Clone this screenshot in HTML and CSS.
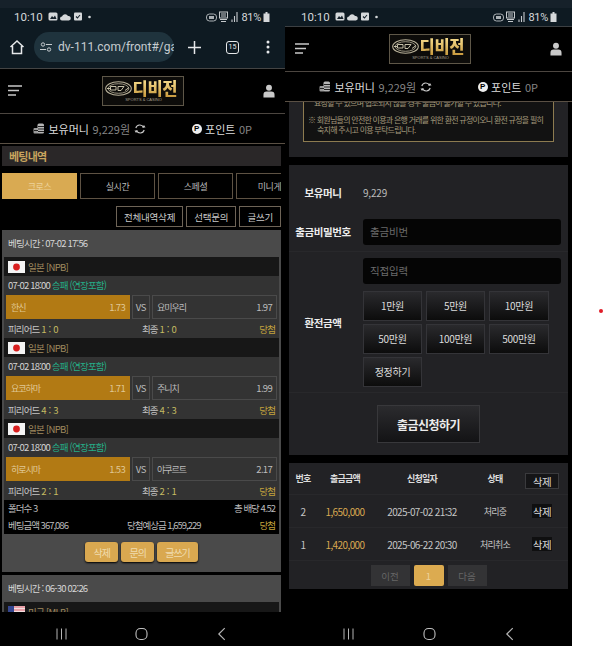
FILE: index.html
```html
<!DOCTYPE html>
<html lang="ko">
<head>
    <meta charset="UTF-8">
    <meta name="viewport" content="width=device-width, initial-scale=1.0">
    <title>디비전</title>
    <link rel="stylesheet" href="styles.css">
</head>
<body>
    <svg class="sprites" xmlns="http://www.w3.org/2000/svg">
        <symbol id="i-status-left" viewBox="0 0 46 10">
            <rect x="0.5" y="0.5" width="9" height="8" rx="1.5" fill="#d5d8da"/>
            <path d="M2 7l2-3 1.500 1.500L7 3.500 8.500 7z" fill="#142029"/>
            <path d="M14 8.500a2 2 0 0 1 0-4 3.200 3.200 0 0 1 6-.5 2.300 2.300 0 0 1 1 4.500z" fill="#d5d8da"/>
            <rect x="26" y="0.500" width="8" height="8" rx="1" fill="#d5d8da"/>
            <path d="M28 4.500l1.500 1.500 2.500-3" stroke="#142029" stroke-width="1.100" fill="none"/>
            <circle cx="41.500" cy="5" r="1.300" fill="#d5d8da"/>
        </symbol>
        <symbol id="i-status-right" viewBox="0 0 32 12">
            <rect x="0.500" y="3" width="10" height="7" rx="3" fill="none" stroke="#aab0b4"/>
            <rect x="3" y="5" width="5" height="3" fill="#aab0b4"/>
            <rect x="13.500" y="1" width="8" height="6" fill="none" stroke="#c5c9cc"/>
            <path d="M15 3h5M15 5h5M14 8.500h7M15 10.500h5" stroke="#c5c9cc"/>
            <path d="M26 11V8.500M28.500 11V5M31 11V1" stroke="#c5c9cc" stroke-width="1.100"/>
        </symbol>
        <symbol id="i-battery" viewBox="0 0 7 10">
            <path d="M2.500 0h2v1.500h2V10H.5V1.500h2z" fill="#d5d8da"/>
        </symbol>
        <symbol id="i-menu" viewBox="0 0 14 12">
            <path d="M0 1h14M0 5.500h11M0 10h8" stroke="#c8c8c8" stroke-width="1.300"/>
        </symbol>
        <symbol id="i-user" viewBox="0 0 13 14">
            <circle cx="6.500" cy="3.500" r="3.200" fill="#c9c9c9"/>
            <path d="M0.500 14v-3a3.500 3.500 0 0 1 3.500-3.500h5a3.500 3.500 0 0 1 3.500 3.500v3z" fill="#c9c9c9"/>
        </symbol>
        <symbol id="i-coins" viewBox="0 0 12 11">
            <rect x="0.500" y="5" width="5" height="5.500" rx="1" fill="#9a9a9a"/>
            <rect x="4.500" y="0.500" width="6.500" height="10" rx="1.500" fill="#b5b5b5"/>
            <path d="M5 3.500h6M5 6h6M5 8.500h6M1 7.500h4" stroke="#222"/>
        </symbol>
        <symbol id="i-refresh" viewBox="0 0 12 10">
            <path d="M1.800 4a4.200 4.200 0 0 1 7.800-.6M10.200 6a4.200 4.200 0 0 1-7.800.6" stroke="#c8c8c8" fill="none" stroke-width="1.100"/>
            <path d="M8 3.500h3.500L10 1zM4 6.500H.5L2 9z" fill="#c8c8c8"/>
        </symbol>
        <symbol id="i-emblem" viewBox="0 0 27 15">
            <ellipse cx="13.500" cy="7.500" rx="12.800" ry="6.800" fill="none" stroke="#b9b29a" stroke-width="1.100"/>
            <ellipse cx="13.500" cy="7.500" rx="10.300" ry="4.800" fill="none" stroke="#b9b29a" stroke-width="0.800"/>
            <path d="M5.500 5.500h5.500v3.500H5.500zM13 5.500h6l-3 4h-3zM2 7.500h3M20 9.500l4-3" stroke="#d8d2b8" stroke-width="0.900" fill="none"/>
        </symbol>
        <symbol id="i-flag-jp" viewBox="0 0 17 12">
            <rect width="17" height="12" fill="#f4f4f4"/>
            <circle cx="8.500" cy="6" r="3.400" fill="#d81e1e"/>
        </symbol>
        <symbol id="i-flag-us" viewBox="0 0 17 12">
            <rect width="17" height="12" fill="#e8a0a8"/>
            <path d="M0 2.500h17M0 5.500h17M0 8.500h17" stroke="#f3dfe0" stroke-width="1.200"/>
            <rect width="6" height="12" fill="#35468f"/>
        </symbol>
        <symbol id="i-nav" viewBox="0 0 12 14">
            <path d="M1.500 1.500v11M6 1.500v11M10.500 1.500v11" stroke="#b5b5b5" stroke-width="1"/>
        </symbol>
        <symbol id="i-nav-home" viewBox="0 0 13 13">
            <rect x="1" y="1" width="11" height="11" rx="4.500" fill="none" stroke="#c0c0c0" stroke-width="1.100"/>
        </symbol>
        <symbol id="i-nav-back" viewBox="0 0 8 13">
            <path d="M7 1L1.500 6.500 7 12" fill="none" stroke="#b5b5b5" stroke-width="1.100"/>
        </symbol>
    </svg>

    <div class="screens">
        <!-- left phone : betting history -->
        <section class="phone phone-left">
            <div class="top-band"></div>
            <div class="status-bar">
                <span class="clock">10:10</span>
                <svg class="status-icons"><use href="#i-status-left"/></svg>
                <span class="status-right">
                    <svg class="status-net"><use href="#i-status-right"/></svg>
                    <span>81%</span>
                    <svg class="status-battery"><use href="#i-battery"/></svg>
                </span>
            </div>
            <div class="chrome-bar">
                <svg class="chrome-home" viewBox="0 0 16 16"><path d="M1.500 8L8 2l6.500 6M3.500 7v7.500h9V7" fill="none" stroke="#e6e8ea" stroke-width="1.500"/></svg>
                <div class="url-pill">
                    <svg class="url-tune" viewBox="0 0 12 10"><circle cx="3" cy="2.500" r="1.700" fill="none" stroke="#c6ccd0"/><circle cx="9" cy="7.500" r="1.700" fill="none" stroke="#c6ccd0"/><path d="M6 2.500h6M0 7.500h6" stroke="#c6ccd0"/></svg>
                    <span class="url-text">dv-111.com/front#/game</span>
                </div>
                <svg class="chrome-plus" viewBox="0 0 13 13"><path d="M6.500 0v13M0 6.500h13" stroke="#e6e8ea" stroke-width="1.500"/></svg>
                <span class="chrome-tabs">15</span>
                <svg class="chrome-more" viewBox="0 0 4 14"><circle cx="2" cy="2" r="1.500" fill="#e6e8ea"/><circle cx="2" cy="7" r="1.500" fill="#e6e8ea"/><circle cx="2" cy="12" r="1.500" fill="#e6e8ea"/></svg>
            </div>
            <header class="site-header">
                <svg class="icon-menu"><use href="#i-menu"/></svg>
                <div class="logo">
                    <div class="logo-main">
                        <svg class="logo-emblem"><use href="#i-emblem"/></svg>
                        <span class="logo-name">디비전</span>
                    </div>
                    <div class="logo-sub">SPORTS &amp; CASINO</div>
                </div>
                <svg class="icon-user"><use href="#i-user"/></svg>
            </header>
            <div class="money-bar">
                <div class="money-item">
                    <svg class="icon-coins"><use href="#i-coins"/></svg>
                    <span>보유머니</span>
                    <span class="money-value">9,229원</span>
                    <svg class="icon-refresh"><use href="#i-refresh"/></svg>
                </div>
                <div class="money-item">
                    <span class="icon-point">P</span>
                    <span>포인트</span>
                    <span class="money-value">0P</span>
                </div>
            </div>

            <main class="history">
                <h2 class="history-title">베팅내역</h2>
                <div class="tabs">
                    <button class="tab tab-active">크로스</button>
                    <button class="tab">실시간</button>
                    <button class="tab">스페셜</button>
                    <button class="tab">미니게임</button>
                </div>
                <div class="history-actions">
                    <button class="outline-btn">전체내역삭제</button>
                    <button class="outline-btn">선택문의</button>
                    <button class="outline-btn">글쓰기</button>
                </div>

                <article class="bet-card">
                    <div class="bet-time">베팅시간 : 07-02 17:56</div>
                    <div class="game">
                        <div class="league"><svg class="flag"><use href="#i-flag-jp"/></svg>일본 [NPB]</div>
                        <div class="game-time">07-02 18:00 <span class="game-type">승패 (연장포함)</span></div>
                        <div class="odds">
                            <div class="odd odd-picked"><span class="odd-name">한신</span><span>1.73</span></div>
                            <div class="odd-vs">VS</div>
                            <div class="odd"><span class="odd-name">요미우리</span><span>1.97</span></div>
                        </div>
                        <div class="result">
                            <span class="result-period">피리어드 <em>1 : 0</em></span>
                            <span class="result-final">최종 <em>1 : 0</em></span>
                            <span class="result-win">당첨</span>
                        </div>
                    </div>
                    <div class="game">
                        <div class="league"><svg class="flag"><use href="#i-flag-jp"/></svg>일본 [NPB]</div>
                        <div class="game-time">07-02 18:00 <span class="game-type">승패 (연장포함)</span></div>
                        <div class="odds">
                            <div class="odd odd-picked"><span class="odd-name">요코하마</span><span>1.71</span></div>
                            <div class="odd-vs">VS</div>
                            <div class="odd"><span class="odd-name">주니치</span><span>1.99</span></div>
                        </div>
                        <div class="result">
                            <span class="result-period">피리어드 <em>4 : 3</em></span>
                            <span class="result-final">최종 <em>4 : 3</em></span>
                            <span class="result-win">당첨</span>
                        </div>
                    </div>
                    <div class="game">
                        <div class="league"><svg class="flag"><use href="#i-flag-jp"/></svg>일본 [NPB]</div>
                        <div class="game-time">07-02 18:00 <span class="game-type">승패 (연장포함)</span></div>
                        <div class="odds">
                            <div class="odd odd-picked"><span class="odd-name">히로시마</span><span>1.53</span></div>
                            <div class="odd-vs">VS</div>
                            <div class="odd"><span class="odd-name">야쿠르트</span><span>2.17</span></div>
                        </div>
                        <div class="result">
                            <span class="result-period">피리어드 <em>2 : 1</em></span>
                            <span class="result-final">최종 <em>2 : 1</em></span>
                            <span class="result-win">당첨</span>
                        </div>
                    </div>
                    <div class="bet-summary">
                        <div class="summary-row">
                            <span>폴더수 3</span>
                            <span>총 배당 4.52</span>
                        </div>
                        <div class="summary-row">
                            <span>베팅금액 367,086</span>
                            <span class="summary-expect">당첨예상금 1,659,229</span>
                            <span class="result-win">당첨</span>
                        </div>
                    </div>
                    <div class="bet-actions">
                        <button class="gold-btn">삭제</button>
                        <button class="gold-btn">문의</button>
                        <button class="gold-btn">글쓰기</button>
                    </div>
                </article>

                <article class="bet-card">
                    <div class="bet-time">베팅시간 : 06-30 02:26</div>
                    <div class="game">
                        <div class="league"><svg class="flag"><use href="#i-flag-us"/></svg>미국 [MLB]</div>
                    </div>
                </article>
            </main>

            <nav class="nav-bar">
                <svg class="nav-icon"><use href="#i-nav"/></svg>
                <svg class="nav-icon"><use href="#i-nav-home"/></svg>
                <svg class="nav-icon"><use href="#i-nav-back"/></svg>
            </nav>
        </section>

        <!-- right phone : withdraw -->
        <section class="phone phone-right">
            <div class="top-band"></div>
            <div class="status-bar">
                <span class="clock">10:10</span>
                <svg class="status-icons"><use href="#i-status-left"/></svg>
                <span class="status-right">
                    <svg class="status-net"><use href="#i-status-right"/></svg>
                    <span>81%</span>
                    <svg class="status-battery"><use href="#i-battery"/></svg>
                </span>
            </div>
            <header class="site-header">
                <svg class="icon-menu"><use href="#i-menu"/></svg>
                <div class="logo">
                    <div class="logo-main">
                        <svg class="logo-emblem"><use href="#i-emblem"/></svg>
                        <span class="logo-name">디비전</span>
                    </div>
                    <div class="logo-sub">SPORTS &amp; CASINO</div>
                </div>
                <svg class="icon-user"><use href="#i-user"/></svg>
            </header>
            <div class="money-bar">
                <div class="money-item">
                    <svg class="icon-coins"><use href="#i-coins"/></svg>
                    <span>보유머니</span>
                    <span class="money-value">9,229원</span>
                    <svg class="icon-refresh"><use href="#i-refresh"/></svg>
                </div>
                <div class="money-item">
                    <span class="icon-point">P</span>
                    <span>포인트</span>
                    <span class="money-value">0P</span>
                </div>
            </div>

            <main class="withdraw">
                <div class="panel notice-panel">
                    <div class="notice">
                        <p class="notice-cont">요청할 수 있으며 협조되지 않을 경우 출금이 불가할 수 있습니다.</p>
                        <p class="notice-line">※ 회원님들의 안전한 이용과 은행 거래를 위한 환전 규정이오니 환전 규정을 필히</p>
                        <p class="notice-indent">숙지해 주시고 이용 부탁드립니다.</p>
                    </div>
                </div>

                <div class="panel form-panel">
                    <div class="form-row form-row-balance">
                        <div class="form-label">보유머니</div>
                        <div class="form-value">9,229</div>
                    </div>
                    <div class="form-row form-row-password">
                        <div class="form-label">출금비밀번호</div>
                        <input class="form-input" type="text" placeholder="출금비번">
                    </div>
                    <div class="form-row form-row-amount">
                        <div class="form-label">환전금액</div>
                        <div class="amount-box">
                            <input class="form-input" type="text" placeholder="직접입력">
                            <div class="amount-grid">
                                <button class="amount-btn">1만원</button>
                                <button class="amount-btn">5만원</button>
                                <button class="amount-btn">10만원</button>
                                <button class="amount-btn">50만원</button>
                                <button class="amount-btn">100만원</button>
                                <button class="amount-btn">500만원</button>
                                <button class="amount-btn">정정하기</button>
                            </div>
                        </div>
                    </div>
                    <div class="form-submit">
                        <button class="submit-btn">출금신청하기</button>
                    </div>
                </div>

                <div class="panel table-panel">
                    <div class="t-row t-head">
                        <span>번호</span>
                        <span>출금금액</span>
                        <span>신청일자</span>
                        <span>상태</span>
                        <span><button class="t-del-head">삭제</button></span>
                    </div>
                    <div class="t-row">
                        <span>2</span>
                        <span class="t-amount">1,650,000</span>
                        <span>2025-07-02 21:32</span>
                        <span class="t-status">처리중</span>
                        <span><button class="t-del">삭제</button></span>
                    </div>
                    <div class="t-row">
                        <span>1</span>
                        <span class="t-amount">1,420,000</span>
                        <span>2025-06-22 20:30</span>
                        <span class="t-status">처리취소</span>
                        <span><button class="t-del">삭제</button></span>
                    </div>
                    <div class="pager">
                        <button class="page-btn page-side">이전</button>
                        <button class="page-btn page-current">1</button>
                        <button class="page-btn page-side">다음</button>
                    </div>
                </div>
            </main>

            <nav class="nav-bar">
                <svg class="nav-icon"><use href="#i-nav"/></svg>
                <svg class="nav-icon"><use href="#i-nav-home"/></svg>
                <svg class="nav-icon"><use href="#i-nav-back"/></svg>
            </nav>
        </section>
    </div>

    <span class="red-dot"></span>
</body>
</html>
```

FILE: styles.css
```css
* {
    box-sizing: border-box;
}

body {
    margin: 0;
    background-color: #fff;
    font-family: "Noto Sans CJK KR", "Noto Sans", sans-serif;
    font-size: 10px;
    color: #ccc;
}

button, input {
    font-family: inherit;
    margin: 0;
    padding: 0;
}

.sprites {
    display: none;
}

.screens {
    display: flex;
    height: 646px;
    width: 572px;
}

.phone {
    display: flex;
    flex-direction: column;
    height: 646px;
    background-color: #000;
    overflow: hidden;
}

.phone-left {
    width: 285px;
}

.phone-right {
    width: 287px;
}

.red-dot {
    position: absolute;
    left: 599px;
    top: 309px;
    width: 4px;
    height: 4px;
    border-radius: 50%;
    background-color: #e01c28;
}

/* status + browser */
.top-band {
    height: 8px;
    flex: none;
    background-color: #16212a;
}

.status-bar {
    display: flex;
    align-items: center;
    flex: none;
    height: 18px;
    padding: 0 15px 0 14px;
    background-color: #0e1a22;
    font-family: Roboto, sans-serif;
    font-size: 11.500px;
    color: #d5d8da;
}

.status-icons {
    width: 46px;
    height: 10px;
    margin-left: 5px;
}

.status-right {
    display: flex;
    align-items: center;
    margin-left: auto;
    gap: 3px;
    font-size: 11px;
    letter-spacing: -0.300px;
}

.status-net {
    width: 32px;
    height: 12px;
}

.status-battery {
    width: 7px;
    height: 10px;
    margin-left: -1px;
}

.phone-right .status-bar {
    padding-left: 16px;
    border-bottom: 1px solid #3c4043;
    height: 19px;
}

.chrome-bar {
    display: flex;
    align-items: center;
    flex: none;
    height: 43px;
    padding: 0 15px 0 9px;
    background-color: #0e1a22;
    border-bottom: 1px solid #444;
}

.chrome-home {
    width: 16px;
    height: 16px;
    flex: none;
}

.url-pill {
    display: flex;
    align-items: center;
    width: 140px;
    height: 30px;
    margin-left: 9px;
    padding: 0 0 0 6px;
    border-radius: 15px;
    background-color: #1f333d;
    overflow: hidden;
    flex: none;
}

.url-tune {
    width: 12px;
    height: 10px;
    flex: none;
}

.url-text {
    margin-left: 6px;
    font-family: Roboto, sans-serif;
    font-size: 12px;
    color: #c6ccd0;
    white-space: nowrap;
}

.chrome-plus {
    width: 13px;
    height: 13px;
    margin-left: 14px;
    flex: none;
}

.chrome-tabs {
    width: 13px;
    height: 13px;
    margin-left: 25px;
    border: 1.400px solid #e6e8ea;
    border-radius: 3px;
    font-family: Roboto, sans-serif;
    font-size: 7px;
    line-height: 10px;
    text-align: center;
    color: #e6e8ea;
    flex: none;
}

.chrome-more {
    width: 4px;
    height: 14px;
    margin-left: 27px;
    flex: none;
}

/* site header */
.site-header {
    display: flex;
    align-items: center;
    justify-content: space-between;
    flex: none;
    height: 45px;
    padding: 0 10px 0 8px;
    background-color: #000;
    border-bottom: 1px solid #4c4640;
}

.phone-right .site-header {
    padding: 0 10px;
}

.icon-menu {
    width: 14px;
    height: 12px;
}

.icon-user {
    width: 12px;
    height: 14px;
}

.logo {
    width: 82px;
    height: 30px;
    padding: 3px 0 0 2px;
    border: 1px solid #5e5748;
    background-color: #0d0c0a;
}

.logo-main {
    display: flex;
    align-items: center;
    height: 17px;
}

.logo-emblem {
    width: 27px;
    height: 15px;
    flex: none;
}

.logo-name {
    margin-left: 1px;
    font-size: 16.500px;
    font-weight: 900;
    line-height: 17px;
    letter-spacing: -0.300px;
    background: linear-gradient(#f6dc8c, #c99a3e);
    -webkit-background-clip: text;
    background-clip: text;
    color: transparent;
}

.logo-sub {
    font-family: "Liberation Sans", sans-serif;
    font-size: 4px;
    line-height: 6px;
    text-align: center;
    color: #a49f90;
}

.money-bar {
    display: flex;
    align-items: center;
    justify-content: space-between;
    flex: none;
    height: 30px;
    padding: 0 33px;
    background-color: #000;
    border-bottom: 1px solid #5a5044;
    font-size: 11px;
    color: #dcdcdc;
}

.phone-right .money-bar {
    padding: 0 34px;
}

.money-item {
    display: flex;
    align-items: center;
    gap: 3.500px;
    white-space: nowrap;
}

.money-value {
    color: #858585;
}

.icon-coins {
    width: 12px;
    height: 11px;
}

.icon-refresh {
    width: 12px;
    height: 10px;
}

.icon-point {
    width: 10px;
    height: 10px;
    border-radius: 50%;
    background-color: #eee;
    font-family: "Liberation Sans", sans-serif;
    font-size: 8px;
    font-weight: 700;
    line-height: 10px;
    text-align: center;
    color: #000;
}

/* betting history */
.history {
    flex: 1;
    min-height: 0;
    padding: 2px 4px 0 2px;
    overflow: hidden;
}

.history-title {
    margin: 0;
    height: 20px;
    padding-left: 7px;
    background-color: #2a2728;
    font-size: 11px;
    font-weight: 700;
    line-height: 20px;
    letter-spacing: -0.800px;
    color: #c8a45e;
}

.tabs {
    display: flex;
    gap: 3px;
    margin-top: 7px;
    overflow: hidden;
}

.tab {
    flex: none;
    width: 75px;
    height: 26px;
    border: 1px solid #5e5243;
    background-color: #000;
    font-size: 9px;
    letter-spacing: -0.400px;
    color: #bbb;
    white-space: nowrap;
}

.tab-active {
    border-color: #d9aa52;
    background-color: #d9aa52;
    color: #edd29a;
}

.history-actions {
    display: flex;
    justify-content: flex-end;
    gap: 3px;
    margin-top: 7px;
}

.outline-btn {
    height: 21px;
    padding: 0 7px;
    border: 1px solid #6e6457;
    background-color: #000;
    font-size: 9.500px;
    letter-spacing: -0.200px;
    color: #c9c9c9;
}

.bet-card {
    margin-top: 3px;
    padding: 0 2px;
    background-color: #4a4a4a;
}

.bet-time {
    height: 27px;
    padding-left: 4px;
    font-size: 9.500px;
    line-height: 27px;
    letter-spacing: -0.800px;
    color: #d6d6d6;
}

.game {
    background-color: #333;
}

.league {
    display: flex;
    align-items: center;
    height: 19px;
    padding-left: 4px;
    background-color: #171717;
    font-size: 9.500px;
    letter-spacing: -0.700px;
    color: #a08a5f;
}

.flag {
    width: 17px;
    height: 12px;
    margin-right: 3px;
}

.game-time {
    height: 19px;
    padding-left: 4px;
    font-size: 9.500px;
    line-height: 19px;
    letter-spacing: -0.800px;
    color: #d4d4d4;
}

.game-type {
    color: #25ad87;
}

.odds {
    display: flex;
    gap: 2px;
    height: 24px;
    padding: 0 2px;
    font-size: 9.500px;
    letter-spacing: -0.700px;
}

.odd {
    display: flex;
    align-items: center;
    justify-content: space-between;
    flex: 1;
    padding: 0 4px;
    border: 1px solid #4a4a4a;
    color: #bdbdbd;
}

.odd-name {
    font-size: 9px;
    letter-spacing: -1px;
}

.odd-picked {
    flex: none;
    width: 124px;
    border-color: #b27a14;
    background-color: #b27a14;
    color: #e0c896;
}

.odd-vs {
    width: 18px;
    border: 1px solid #4a4a4a;
    font-size: 9.500px;
    line-height: 22px;
    letter-spacing: -0.300px;
    text-align: center;
    color: #bdbdbd;
}

.result {
    position: relative;
    display: flex;
    align-items: center;
    justify-content: space-between;
    height: 19px;
    padding: 0 4px;
    font-size: 9.500px;
    letter-spacing: -0.900px;
    color: #c4c4c4;
}

.result em {
    font-style: normal;
    letter-spacing: -0.300px;
    color: #c4bb62;
}

.result-final {
    position: absolute;
    left: 138px;
}

.result-win {
    color: #c2a23c;
}

.bet-summary {
    height: 34px;
    padding: 0 4px;
    background-color: #000;
    font-size: 9.500px;
    letter-spacing: -1px;
    color: #bcbcbc;
}

.summary-row {
    position: relative;
    display: flex;
    justify-content: space-between;
    height: 17px;
    line-height: 17px;
}

.summary-expect {
    position: absolute;
    left: 119px;
}

.bet-actions {
    display: flex;
    justify-content: center;
    gap: 3px;
    height: 38px;
    padding-top: 8px;
}

.gold-btn {
    height: 20px;
    min-width: 33px;
    padding: 0 8px;
    border: none;
    border-radius: 3px;
    background-color: #d9a850;
    box-shadow: 0 1px 2px #000;
    font-size: 10px;
    letter-spacing: -1px;
    color: #f0dcae;
}

/* withdraw */
.withdraw {
    flex: 1;
    min-height: 0;
    padding: 0 4px;
    overflow: hidden;
}

.panel {
    background-color: #222225;
}

.notice-panel {
    height: 55px;
    padding: 0 14px;
    overflow: hidden;
}

.notice {
    margin-top: -5px;
    height: 45px;
    padding: 1px 4px 0;
    border: 1px solid #8d7b50;
    border-top: none;
    background-color: #121212;
    font-size: 8px;
    line-height: 10px;
    letter-spacing: -0.750px;
    color: #a49a7c;
    white-space: nowrap;
}

.notice p {
    margin: 0;
}

.notice-cont {
    padding-left: 6px;
}

.notice .notice-line {
    margin-top: 7px;
}

.notice-indent {
    padding-left: 9px;
}

.form-panel {
    margin-top: 8px;
    height: 290px;
}

.form-row {
    display: grid;
    grid-template-columns: 68px 1fr;
    column-gap: 6px;
    align-items: center;
    padding-right: 7px;
}

.form-row-balance {
    height: 46px;
    padding-top: 9px;
}

.form-row-password {
    height: 41px;
    padding-top: 1px;
    border-bottom: 1px solid #28282b;
}

.form-row-amount {
    height: 141px;
    border-bottom: 1px solid #28282b;
}

.form-label {
    font-size: 10.500px;
    font-weight: 700;
    letter-spacing: -0.400px;
    text-align: center;
    color: #ececec;
    white-space: nowrap;
}

.form-value {
    font-size: 10px;
    letter-spacing: -0.200px;
    color: #bbb;
}

.form-input {
    display: block;
    width: 198px;
    height: 26px;
    padding-left: 7px;
    border: none;
    border-radius: 3px;
    background-color: #050505;
    font-size: 10.500px;
    letter-spacing: -0.200px;
    outline: none;
}

.form-input::placeholder {
    color: #6b6b6b;
}

.amount-grid {
    display: grid;
    grid-template-columns: 59px 59px 60px;
    grid-auto-rows: 30px;
    gap: 3px 4px;
    margin-top: 7px;
}

.amount-btn {
    border: 1px solid #343438;
    background: linear-gradient(#2a2a2d, #0c0c0c);
    font-size: 10px;
    letter-spacing: -0.300px;
    color: #ddd;
}

.form-submit {
    display: flex;
    justify-content: center;
    padding-top: 12px;
}

.submit-btn {
    width: 103px;
    height: 38px;
    border: 1px solid #38383b;
    background: linear-gradient(#2b2b2e, #131315);
    font-size: 12px;
    font-weight: 700;
    letter-spacing: -0.500px;
    color: #ececec;
}

.table-panel {
    margin-top: 8px;
    height: 126px;
    font-size: 10px;
    letter-spacing: -0.600px;
    color: #c6c6c6;
}

.t-row {
    display: grid;
    grid-template-columns: 28px 56px 98px 48px 46px;
    align-items: center;
    height: 33px;
    text-align: center;
    border-bottom: 1px solid #28282b;
    white-space: nowrap;
}

.t-head {
    height: 32px;
    font-size: 9px;
    font-weight: 700;
    letter-spacing: -0.800px;
    color: #dcdcdc;
}

.t-row > span {
    display: flex;
    justify-content: center;
}

.t-amount {
    color: #d9a850;
}

.t-status {
    font-size: 9px;
    letter-spacing: -0.800px;
}

.t-del-head {
    flex: none;
    width: 34px;
    height: 16px;
    margin-top: 5px;
    border: 1px solid #3a3a3d;
    background-color: #151517;
    font-size: 10.500px;
    letter-spacing: -0.500px;
    color: #dcdcdc;
}

.t-del {
    width: 20px;
    height: 14px;
    border: none;
    background-color: #0f0f10;
    font-size: 10.500px;
    letter-spacing: -0.500px;
    color: #dcdcdc;
}

.pager {
    display: flex;
    justify-content: center;
    gap: 4px;
    padding-top: 4px;
}

.page-btn {
    height: 21px;
    border: none;
    font-size: 9.500px;
}

.page-side {
    width: 39px;
    background-color: #333335;
    color: #666;
}

.page-current {
    width: 30px;
    border-radius: 2px;
    background-color: #dcab50;
    color: #eed39c;
}

/* android nav */
.nav-bar {
    display: flex;
    justify-content: space-between;
    align-items: center;
    flex: none;
    height: 34px;
    padding: 9px 57px 0 55px;
    background-color: #000;
}

.phone-right .nav-bar {
    padding: 9px 56px 0 57px;
}

.nav-icon {
    width: 13px;
    height: 14px;
}
```
